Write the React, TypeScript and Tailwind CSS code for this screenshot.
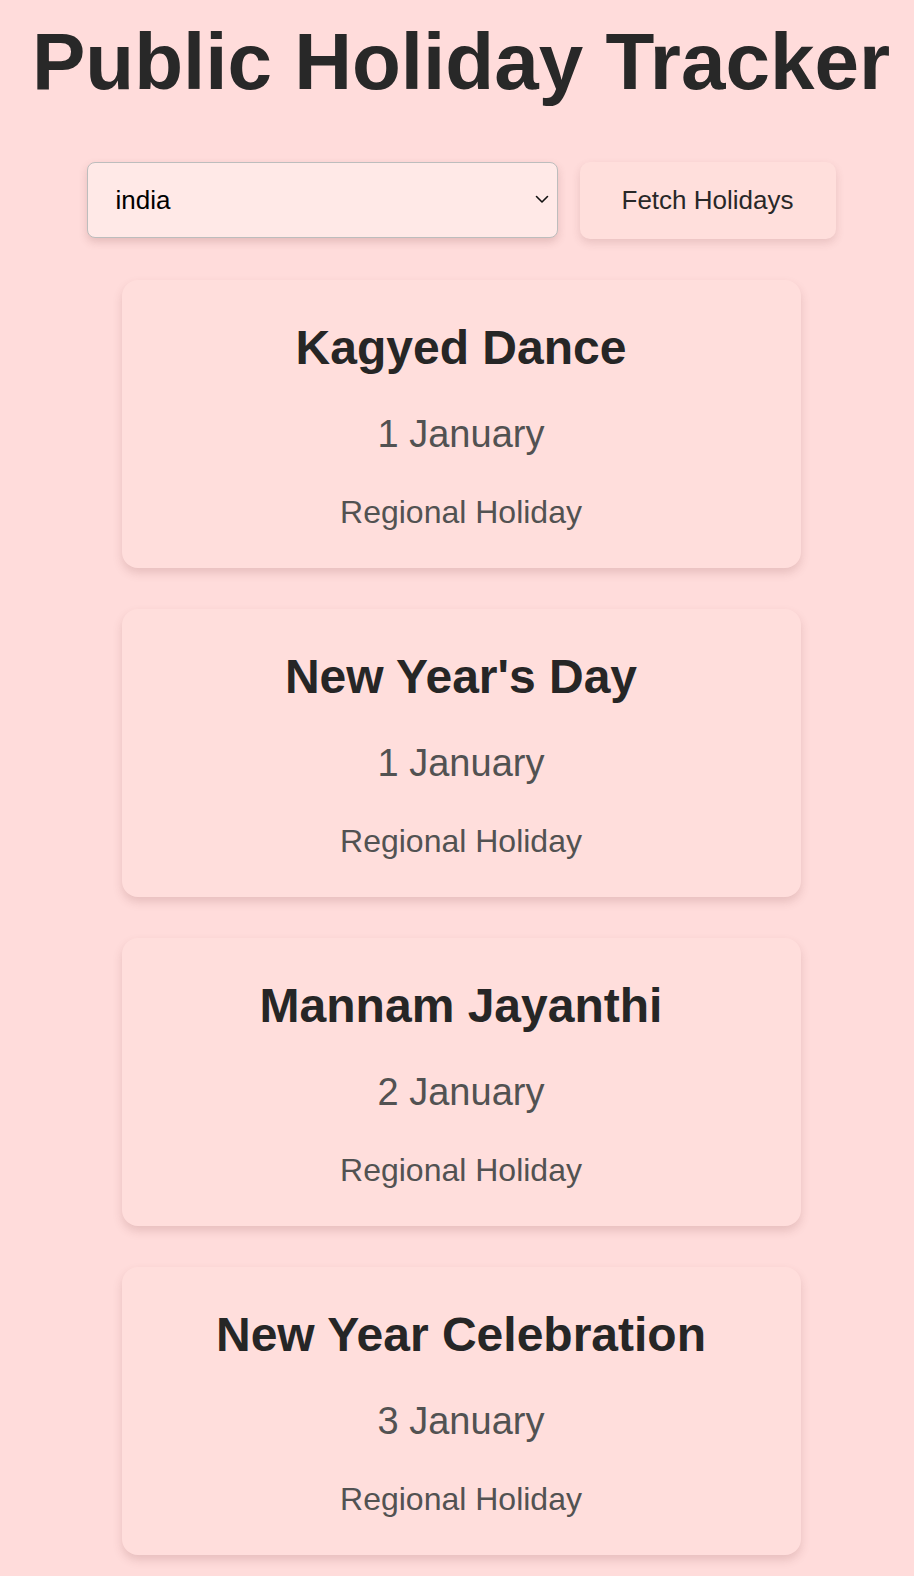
import { useState } from "react";

const holidays = [
  { name: "Kagyed Dance", date: "1 January", type: "Regional Holiday" },
  { name: "New Year's Day", date: "1 January", type: "Regional Holiday" },
  { name: "Mannam Jayanthi", date: "2 January", type: "Regional Holiday" },
  { name: "New Year Celebration", date: "3 January", type: "Regional Holiday" },
];

const HolidayCard = ({ name, date, type }: { name: string; date: string; type: string }) => {
  return (
    <div className="w-[679px] flex flex-col items-center gap-[43px] pt-[44px] pb-[40px] bg-[#ffdedc] rounded-[16px] shadow-[0_5px_10px_rgba(120,60,60,0.18)]">
      <h2 className="text-[48px] leading-none font-bold text-[#262626]">{name}</h2>
      <p className="text-[38px] leading-none text-[#525252]">{date}</p>
      <p className="text-[32px] leading-none text-[#525252]">{type}</p>
    </div>
  );
};

export default function App() {
  const [country, setCountry] = useState("india");

  return (
    <div
      className="min-h-screen bg-[#ffdcdb] pl-[8px] pt-[22px] pb-[30px] flex flex-col items-center"
      style={{ fontFamily: '"Liberation Sans", Arial, Helvetica, sans-serif' }}
    >
      <h1 className="text-[80px] leading-none font-bold text-[#282828] whitespace-nowrap">
        Public Holiday Tracker
      </h1>

      <div className="mt-[60px] flex gap-[22px]">
        <div className="relative w-[471px] h-[76px]">
          <select
            value={country}
            onChange={(e) => setCountry(e.target.value)}
            className="appearance-none w-full h-full pl-[28px] pr-10 text-[26px] text-black bg-[#ffe9e7] border border-[#bdbdbd] rounded-[8px] shadow-[0_4px_9px_rgba(120,60,60,0.2)] outline-none"
          >
            <option value="india">india</option>
            <option value="usa">usa</option>
            <option value="uk">uk</option>
          </select>
          <svg
            className="absolute right-[9px] top-[33px] pointer-events-none"
            width="14"
            height="9"
            viewBox="0 0 14 9"
            fill="none"
          >
            <path d="M1.5 1.5L7 7L12.5 1.5" stroke="#111" strokeWidth="1.6" strokeLinecap="round" strokeLinejoin="round" />
          </svg>
        </div>
        <button className="w-[256px] h-[77px] text-[26px] text-[#282828] bg-[#ffdfdc] rounded-[10px] shadow-[0_4px_9px_rgba(120,60,60,0.16)]">
          Fetch Holidays
        </button>
      </div>

      <div className="mt-[41px] flex flex-col gap-[41px]">
        {holidays.map((h) => (
          <HolidayCard key={h.name} name={h.name} date={h.date} type={h.type} />
        ))}
      </div>
    </div>
  );
}
